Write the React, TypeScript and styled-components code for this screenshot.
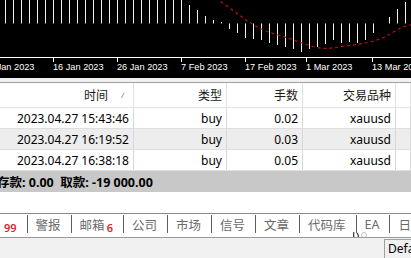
import styled, { createGlobalStyle } from 'styled-components';

const GlobalStyle = createGlobalStyle`
  html, body {
    margin: 0;
    padding: 0;
    background: #ffffff;
  }

  body {
    font-family: "Noto Sans", "Noto Sans CJK SC", sans-serif;
  }

  #root {
    width: 411px;
    height: 258px;
    overflow: hidden;
  }
`;

const Page = styled.div`
  display: flex;
  flex-direction: column;
  width: 411px;
  height: 258px;
  overflow: hidden;
  background: #ffffff;
`;

const ChartPane = styled.div`
  flex: 0 0 78px;
  background: #000000;
  overflow: hidden;

  svg {
    display: block;
  }
`;

const Splitter = styled.div`
  flex: 0 0 4px;
  background: #f0f0f0;
`;

const Table = styled.div`
  display: flex;
  flex-direction: column;
  border-top: 1px solid #a0a0a0;
  font-size: 12px;
  color: #000000;
`;

const COLUMNS = '134px 93px 76px 93px 1fr';

const HeaderRow = styled.div`
  display: grid;
  grid-template-columns: ${COLUMNS};
  height: 24px;
  border-bottom: 1px solid #e2e2e2;
  background: #ffffff;
`;

const HeaderCell = styled.div`
  display: flex;
  align-items: center;
  justify-content: flex-end;
  padding-right: 4px;
  border-right: 1px solid #e2e2e2;
  color: #1a1a1a;
  white-space: nowrap;
`;

const SortMark = styled.span`
  display: inline-flex;
  width: 9px;
  margin-left: 12px;
`;

const Row = styled.div<{ $shaded: boolean }>`
  display: grid;
  grid-template-columns: ${COLUMNS};
  height: 20px;
  border-bottom: 1px solid #dedede;
  background: ${({ $shaded }) => ($shaded ? '#ededed' : '#ffffff')};
`;

const Cell = styled.div`
  display: flex;
  align-items: center;
  justify-content: flex-end;
  padding-right: 4px;
  border-right: 1px solid #d8d8d8;
  white-space: nowrap;
`;

const SummaryRow = styled.div`
  display: flex;
  align-items: center;
  height: 21px;
  background: #c8c8c8;
  font-size: 12.5px;
  font-weight: 700;
  white-space: pre;
  overflow: hidden;

  span {
    margin-left: -3px;
  }
`;

const Filler = styled.div`
  flex: 1;
  background: #ffffff;
`;

const TabBar = styled.div`
  position: relative;
  display: flex;
  align-items: flex-start;
  height: 25px;
  padding-top: 1px;
  box-sizing: border-box;
  border-top: 1px solid #8c8c8c;
  border-bottom: 1px solid #9a9a9a;
  background: #ffffff;
  font-size: 12.5px;
  color: #6a6a6a;
  white-space: nowrap;
  overflow: hidden;
`;

const Tab = styled.div<{ $first?: boolean }>`
  flex: 0 0 auto;
  display: flex;
  align-items: center;
  height: 18px;
  padding: ${({ $first }) => ($first ? '0 10px 0 2px' : '0 10px 0 8px')};
  border-left: ${({ $first }) => ($first ? 'none' : '1px solid #5e5e5e')};
`;

const Counter = styled.span`
  margin-left: 2px;
  font-size: 11px;
  font-weight: 600;
  color: #e0242c;
  position: relative;
  top: 3px;
`;

const Watermark = styled.span`
  position: absolute;
  left: 352px;
  bottom: -4px;
  display: flex;
`;

const StatusBar = styled.div`
  flex: 0 0 20px;
  display: grid;
  grid-template-columns: 384px 1fr;
  background: #f0f0f0;
  overflow: hidden;
`;

const StatusPanel = styled.div`
  margin-top: 1px;
  padding-left: 3px;
  border-top: 1px solid #a0a0a0;
  border-left: 1px solid #a0a0a0;
  font-size: 12px;
  line-height: 18px;
  color: #000000;
  white-space: nowrap;
  overflow: hidden;
`;

// bar spans for x = 5 + 8k, [top, bottom]
const ZERO = 23.5;
const bars: Array<[number, number] | null> = [
  ...Array.from({ length: 23 }, (): [number, number] => [0, ZERO]),
  [5, ZERO], [10, ZERO], [16, ZERO], [20, ZERO], [22, ZERO],
  [ZERO, 29], [ZERO, 33], [ZERO, 38], [ZERO, 39], [ZERO, 40],
  [ZERO, 43], [ZERO, 45], [ZERO, 47], [ZERO, 49], [ZERO, 52],
  [ZERO, 49], [ZERO, 47], [ZERO, 44], [ZERO, 40], [ZERO, 43],
  [ZERO, 42], [ZERO, 43], [ZERO, 40], [ZERO, 33],
  null,
  [17, ZERO], [9, ZERO], [2, ZERO],
];

const ticks = [
  { x: -11, label: '6 Jan 2023' },
  { x: 53, label: '16 Jan 2023' },
  { x: 117, label: '26 Jan 2023' },
  { x: 181, label: '7 Feb 2023' },
  { x: 245, label: '17 Feb 2023' },
  { x: 306, label: '1 Mar 2023' },
  { x: 372, label: '13 Mar 2023' },
];

const trades = [
  { time: '2023.04.27 15:43:46', type: 'buy', lots: '0.02', symbol: 'xauusd' },
  { time: '2023.04.27 16:19:52', type: 'buy', lots: '0.03', symbol: 'xauusd' },
  { time: '2023.04.27 16:38:18', type: 'buy', lots: '0.05', symbol: 'xauusd' },
];

const tabs = [
  { label: '警报' },
  { label: '邮箱', count: '6' },
  { label: '公司' },
  { label: '市场' },
  { label: '信号' },
  { label: '文章' },
  { label: '代码库' },
  { label: 'EA' },
  { label: '日志' },
];

const Chart = () => (
  <svg width="411" height="78" viewBox="0 0 411 78">
    {bars.map((bar, k) =>
      bar ? (
        <line
          key={k}
          x1={5.5 + 8 * k}
          x2={5.5 + 8 * k}
          y1={bar[0]}
          y2={bar[1]}
          stroke="#f2f2f2"
          strokeWidth="1"
        />
      ) : null,
    )}
    <path
      d="M216 -2 C224 4 234 11 242 17 S260 30 278 35 S300 43 313 46.5 S330 48 342 46.5 S362 44 372 41.5 S388 35 396 30.5 S406 26 412 24.5"
      fill="none"
      stroke="#b3111a"
      strokeWidth="1.2"
      strokeDasharray="3 3"
    />
    <line x1="0" x2="411" y1="57.5" y2="57.5" stroke="#ffffff" strokeWidth="1" />
    {ticks.map((tick) => (
      <g key={tick.label}>
        <line
          x1={tick.x + 0.5}
          x2={tick.x + 0.5}
          y1="57"
          y2="62"
          stroke="#ffffff"
          strokeWidth="1"
        />
        <text
          x={tick.x}
          y="70"
          fill="#ffffff"
          fontSize="9.2"
          fontFamily='"Liberation Sans", Arial, sans-serif'
        >
          {tick.label}
        </text>
      </g>
    ))}
  </svg>
);

const App = () => {
  return (
    <>
      <GlobalStyle />
      <Page>
        <ChartPane>
          <Chart />
        </ChartPane>
        <Splitter />
        <Table>
          <HeaderRow>
            <HeaderCell>
              时间
              <SortMark>
                <svg width="9" height="10" viewBox="0 0 9 10">
                  <line x1="1.5" y1="8" x2="4" y2="3" stroke="#9a9a9a" strokeWidth="1" />
                </svg>
              </SortMark>
            </HeaderCell>
            <HeaderCell>类型</HeaderCell>
            <HeaderCell>手数</HeaderCell>
            <HeaderCell>交易品种</HeaderCell>
            <HeaderCell />
          </HeaderRow>
          {trades.map((trade, index) => (
            <Row key={trade.time} $shaded={index % 2 === 1}>
              <Cell>{trade.time}</Cell>
              <Cell>{trade.type}</Cell>
              <Cell>{trade.lots}</Cell>
              <Cell>{trade.symbol}</Cell>
              <Cell />
            </Row>
          ))}
          <SummaryRow>
            <span>存款: 0.00  取款: -19 000.00</span>
          </SummaryRow>
        </Table>
        <Filler />
        <TabBar>
          <Tab $first>
            <Counter>99</Counter>
          </Tab>
          {tabs.map((tab) => (
            <Tab key={tab.label}>
              {tab.label}
              {tab.count ? <Counter>{tab.count}</Counter> : null}
            </Tab>
          ))}
          <Watermark aria-hidden="true">
            <svg width="16" height="10" viewBox="0 0 16 10">
              <path d="M2 1 C1 4 2 7 3 9 M5 2 C7 4 7 7 4 9" fill="none" stroke="#3a3a3a" strokeWidth="1.2" />
              <circle cx="12" cy="4" r="2.5" fill="none" stroke="#b0b0b0" strokeWidth="0.8" />
            </svg>
          </Watermark>
        </TabBar>
        <StatusBar>
          <div />
          <StatusPanel>Default</StatusPanel>
        </StatusBar>
      </Page>
    </>
  );
};

export default App;
